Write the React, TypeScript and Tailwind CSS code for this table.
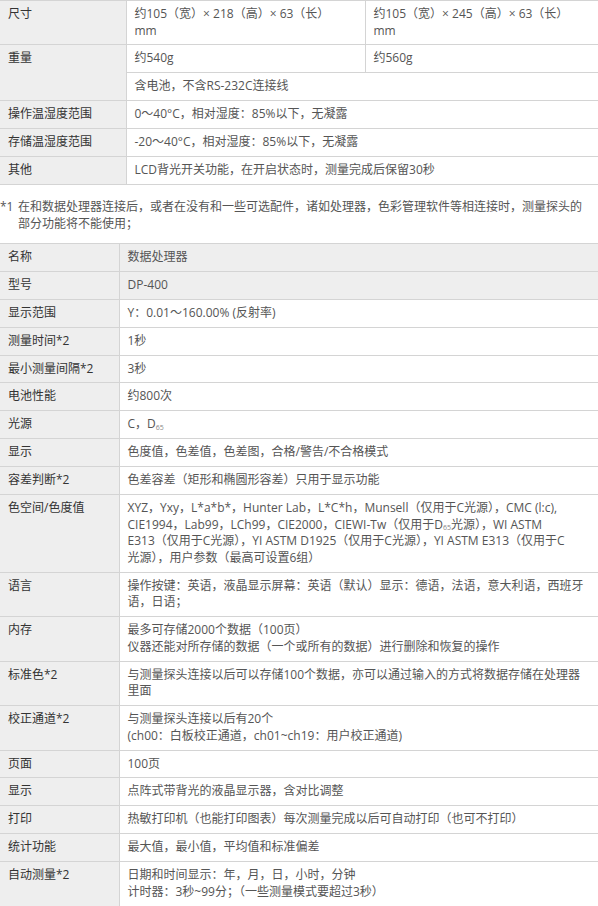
import type { ReactNode } from "react";

const font = {
  fontFamily: '"Open Sans", "Noto Sans CJK SC", sans-serif',
};

const cell = "border border-[#d4d4d4] px-2 pt-[5px] pb-[5.3px] align-top leading-[16.6px]";
const label = `${cell} border-l-0 bg-[#eeeeee] text-[#333]`;
const value = `${cell} text-[#555]`;

type Row = { name: string; value: ReactNode; head?: boolean };

const D65 = (
  <>
    D<sub className="text-[7px] leading-none text-[#888]">65</sub>
  </>
);

const rows: Row[] = [
  { name: "名称", value: "数据处理器", head: true },
  { name: "型号", value: "DP-400", head: true },
  { name: "显示范围", value: "Y：0.01～160.00% (反射率)" },
  { name: "测量时间*2", value: "1秒" },
  { name: "最小测量间隔*2", value: "3秒" },
  { name: "电池性能", value: "约800次" },
  { name: "光源", value: <>C，{D65}</> },
  { name: "显示", value: "色度值，色差值，色差图，合格/警告/不合格模式" },
  { name: "容差判断*2", value: "色差容差（矩形和椭圆形容差）只用于显示功能" },
  {
    name: "色空间/色度值",
    value: (
      <>
        XYZ，Yxy，L*a*b*，Hunter Lab，L*C*h，Munsell（仅用于C光源），CMC (l:c),
        <br />
        CIE1994，Lab99，LCh99，CIE2000，CIEWI-Tw（仅用于{D65}光源），WI ASTM
        <br />
        E313（仅用于C光源），YI ASTM D1925（仅用于C光源），YI ASTM E313（仅用于C
        <br />
        光源），用户参数（最高可设置6组）
      </>
    ),
  },
  {
    name: "语言",
    value: (
      <>
        操作按键：英语，液晶显示屏幕：英语（默认）显示：德语，法语，意大利语，西班牙
        <br />
        语，日语；
      </>
    ),
  },
  {
    name: "内存",
    value: (
      <>
        最多可存储2000个数据（100页）
        <br />
        仪器还能对所存储的数据（一个或所有的数据）进行删除和恢复的操作
      </>
    ),
  },
  {
    name: "标准色*2",
    value: (
      <>
        与测量探头连接以后可以存储100个数据，亦可以通过输入的方式将数据存储在处理器
        <br />
        里面
      </>
    ),
  },
  {
    name: "校正通道*2",
    value: (
      <>
        与测量探头连接以后有20个
        <br />
        (ch00：白板校正通道，ch01~ch19：用户校正通道)
      </>
    ),
  },
  { name: "页面", value: "100页" },
  { name: "显示", value: "点阵式带背光的液晶显示器，含对比调整" },
  { name: "打印", value: "热敏打印机（也能打印图表）每次测量完成以后可自动打印（也可不打印）" },
  { name: "统计功能", value: "最大值，最小值，平均值和标准偏差" },
  {
    name: "自动测量*2",
    value: (
      <>
        日期和时间显示：年，月，日，小时，分钟
        <br />
        计时器：3秒~99分；（一些测量模式要超过3秒）
      </>
    ),
  },
];

export default function App() {
  return (
    <div className="w-[598px] bg-white text-[12px] whitespace-nowrap" style={font}>
      {/* 测量探头规格 */}
      <table className="w-[598px] table-fixed border-collapse">
        <colgroup>
          <col className="w-[126px]" />
          <col className="w-[239px]" />
          <col />
        </colgroup>
        <tbody>
          <tr>
            <td className={label}>尺寸</td>
            <td className={value}>
              约105（宽）× 218（高）× 63（长）
              <br />
              mm
            </td>
            <td className={`${value} border-r-0`}>
              约105（宽）× 245（高）× 63（长）
              <br />
              mm
            </td>
          </tr>
          <tr>
            <td className={label} rowSpan={2}>
              重量
            </td>
            <td className={value}>约540g</td>
            <td className={`${value} border-r-0`}>约560g</td>
          </tr>
          <tr>
            <td className={`${value} border-r-0`} colSpan={2}>
              含电池，不含RS-232C连接线
            </td>
          </tr>
          <tr>
            <td className={label}>操作温湿度范围</td>
            <td className={`${value} border-r-0`} colSpan={2}>
              0～40°C，相对湿度：85%以下，无凝露
            </td>
          </tr>
          <tr>
            <td className={label}>存储温湿度范围</td>
            <td className={`${value} border-r-0`} colSpan={2}>
              -20～40°C，相对湿度：85%以下，无凝露
            </td>
          </tr>
          <tr>
            <td className={label}>其他</td>
            <td className={`${value} border-r-0`} colSpan={2}>
              LCD背光开关功能，在开启状态时，测量完成后保留30秒
            </td>
          </tr>
        </tbody>
      </table>

      <div className="mt-[13px] mb-[11px] flex leading-[17px] text-[#555]">
        <span className="w-[18px] shrink-0">*1</span>
        <p>
          在和数据处理器连接后，或者在没有和一些可选配件，诸如处理器，色彩管理软件等相连接时，测量探头的
          <br />
          部分功能将不能使用；
        </p>
      </div>

      {/* 数据处理器规格 */}
      <table className="w-[598px] table-fixed border-collapse">
        <colgroup>
          <col className="w-[119px]" />
          <col />
        </colgroup>
        <tbody>
          {rows.map((r, i) => (
            <tr key={i}>
              <td className={label}>{r.name}</td>
              <td className={`${value} border-r-0 ${r.head ? "bg-[#eeeeee]" : ""}`}>{r.value}</td>
            </tr>
          ))}
        </tbody>
      </table>
    </div>
  );
}
